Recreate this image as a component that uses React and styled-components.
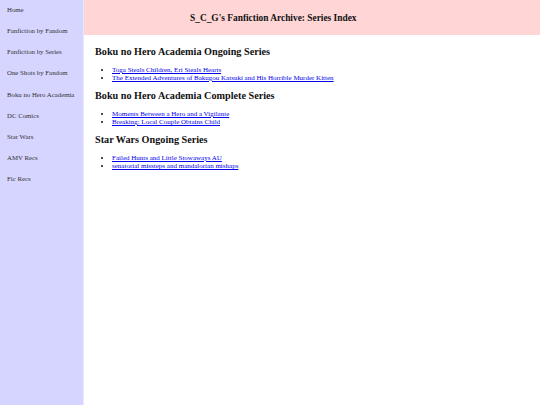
import React from "react";
import styled, { createGlobalStyle } from "styled-components";

const GlobalStyle = createGlobalStyle`
  html, body { margin: 0; padding: 0; background: #ffffff; }
  body { font-family: "Liberation Serif", "Times New Roman", serif; }
`;

const Page = styled.div`
  display: grid;
  grid-template-columns: 84px 1fr;
  min-height: 405px;
`;

const Sidebar = styled.nav`
  background: #d5d5ff;
  border-right: 1px solid #e8e8ff;
  display: flex;
  flex-direction: column;
  gap: 13.15px;
  padding: 6px 0 0 7px;
`;

const NavLink = styled.a`
  font-size: 6.8px;
  line-height: 8px;
  color: #333;
  text-decoration: none;
`;

const Main = styled.div`
  display: flex;
  flex-direction: column;
`;

const Header = styled.header`
  background: #ffd5d5;
  height: 35px;
  display: flex;
  align-items: center;
  padding-left: 106px;
`;

const Title = styled.h1`
  margin: 0;
  font-size: 9.4px;
  font-weight: bold;
  color: #111;
`;

const Content = styled.main`
  display: flex;
  flex-direction: column;
  gap: 8px;
  padding: 11px 0 0 11px;
`;

const Section = styled.section``;

const Heading = styled.h2`
  margin: 0 0 8px;
  font-size: 10.2px;
  line-height: 12px;
  font-weight: bold;
  color: #111;
`;

const List = styled.ul`
  margin: 0;
  padding-left: 17px;
  font-size: 7px;
  line-height: 8px;
`;

const Item = styled.li`
  color: #111;
  a { color: #0000ee; text-decoration: underline; }
`;

const nav = [
  "Home",
  "Fanfiction by Fandom",
  "Fanfiction by Series",
  "One Shots by Fandom",
  "Boku no Hero Academia",
  "DC Comics",
  "Star Wars",
  "AMV Recs",
  "Fic Recs",
];

const sections = [
  {
    title: "Boku no Hero Academia Ongoing Series",
    items: [
      "Toga Steals Children, Eri Steals Hearts",
      "The Extended Adventures of Bakugou Katsuki and His Horrible Murder Kitten",
    ],
  },
  {
    title: "Boku no Hero Academia Complete Series",
    items: ["Moments Between a Hero and a Vigilante", "Breaking: Local Couple Obtains Child"],
  },
  {
    title: "Star Wars Ongoing Series",
    items: ["Failed Hunts and Little Stowaways AU", "senatorial missteps and mandalorian mishaps"],
  },
];

export default function App() {
  return (
    <>
      <GlobalStyle />
      <Page>
        <Sidebar>
          {nav.map((n) => (
            <NavLink key={n} href="#">{n}</NavLink>
          ))}
        </Sidebar>
        <Main>
          <Header>
            <Title>S_C_G's Fanfiction Archive: Series Index</Title>
          </Header>
          <Content>
            {sections.map((s) => (
              <Section key={s.title}>
                <Heading>{s.title}</Heading>
                <List>
                  {s.items.map((i) => (
                    <Item key={i}><a href="#">{i}</a></Item>
                  ))}
                </List>
              </Section>
            ))}
          </Content>
        </Main>
      </Page>
    </>
  );
}
